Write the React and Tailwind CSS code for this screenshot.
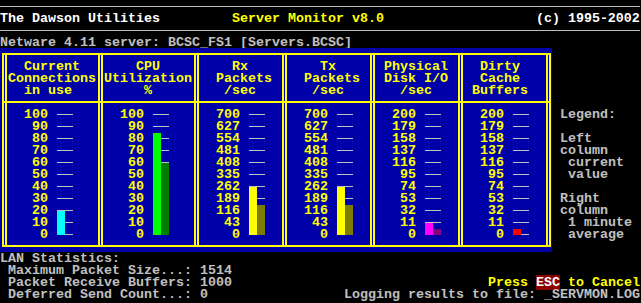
const panels = [
  {
    col: "col-start-2",
    head: ["  Current", "Connections", "  in use"],
    labels: ["100", "90", "80", "70", "60", "50", "40", "30", "20", "10", "0"],
    max: 100,
    cur: 20,
    avg: 0,
    hi: "bg-[#00ffff]",
    lo: "bg-[#008080]",
  },
  {
    col: "col-start-4",
    head: ["    CPU", "Utilization", "     %"],
    labels: ["100", "90", "80", "70", "60", "50", "40", "30", "20", "10", "0"],
    max: 100,
    cur: 85,
    avg: 60,
    hi: "bg-[#00ff00]",
    lo: "bg-[#007c00]",
  },
  {
    col: "col-start-6",
    head: ["    Rx", "  Packets", "   /sec"],
    labels: ["700", "627", "554", "481", "408", "335", "262", "189", "116", "43", "0"],
    max: 700,
    cur: 278,
    avg: 175,
    hi: "bg-[#ffff00]",
    lo: "bg-[#7c7c00]",
  },
  {
    col: "col-start-8",
    head: ["    Tx", "  Packets", "   /sec"],
    labels: ["700", "627", "554", "481", "408", "335", "262", "189", "116", "43", "0"],
    max: 700,
    cur: 278,
    avg: 175,
    hi: "bg-[#ffff00]",
    lo: "bg-[#7c7c00]",
  },
  {
    col: "col-start-10",
    head: [" Physical", " Disk I/O", "   /sec"],
    labels: ["200", "179", "158", "137", "116", "95", "74", "53", "32", "11", "0"],
    max: 200,
    cur: 20.5,
    avg: 10,
    hi: "bg-[#ff00ff]",
    lo: "bg-[#800080]",
  },
  {
    col: "col-start-12",
    head: ["  Dirty", "  Cache", " Buffers"],
    labels: ["200", "179", "158", "137", "116", "95", "74", "53", "32", "11", "0"],
    max: 200,
    cur: 10,
    avg: 0,
    hi: "bg-[#ff0000]",
    lo: "bg-[#800000]",
  },
];

const borderCols = [
  "col-start-1",
  "col-start-3",
  "col-start-5",
  "col-start-7",
  "col-start-9",
  "col-start-11",
  "col-start-13",
];

const hLines = ["row-start-1", "row-start-3", "row-start-5"];

const legend = ["Legend:", "", "Left", "column", " current", " value", "", "Right", "column", " 1 minute", " average"];

// one text-mode row: 12px tall, glyphs pushed down 1px like the VGA font
function Row({ children, className = "" }) {
  return <div className={"h-[12px] pt-[1px] whitespace-pre " + className}>{children}</div>;
}

function GrayLine() {
  return (
    <div className="h-[12px] flex items-center">
      <div className="h-px w-full bg-[#c0c0c0]" />
    </div>
  );
}

function Panel({ p }) {
  // bars: 120px covers the whole scale, zero sits 5px above the bottom of the area
  const curH = (p.cur / p.max) * 120;
  const avgH = (p.avg / p.max) * 120;
  return (
    <>
      <div className={p.col + " row-start-2 flex flex-col"}>
        {p.head.map((h, i) => (
          <Row key={i}>{h}</Row>
        ))}
      </div>
      <div className={p.col + " row-start-4 flex pl-[16px]"}>
        <div className="w-[24px] flex flex-col items-end">
          {p.labels.map((l) => (
            <Row key={l}>{l}</Row>
          ))}
        </div>
        <div className="relative ml-[9px] w-[16px] h-[132px] flex flex-col">
          {p.labels.map((l) => (
            <div key={l} className="h-[12px]">
              <div className="mt-[6px] h-px w-full bg-[#c0c0c0]" />
            </div>
          ))}
          {curH > 0 && (
            <div className={"absolute left-0 bottom-[5px] w-[8px] " + p.hi} style={{ height: curH }} />
          )}
          {avgH > 0 && (
            <div className={"absolute left-[8px] bottom-[5px] w-[8px] " + p.lo} style={{ height: avgH }} />
          )}
        </div>
      </div>
    </>
  );
}

export default function App() {
  return (
    <div className="w-[641px] h-[303px] bg-black overflow-hidden font-[family-name:'Liberation_Mono','Courier_New',monospace] font-bold text-[13.333px] leading-[12px] text-[#c0c0c0]">
      <div className="w-[640px] flex flex-col">
        <GrayLine />
        <Row>
          <span className="text-white">The Dawson Utilities</span>
          {"         "}
          <span className="text-[#ffff00]">Server Monitor v8.0</span>
          {"                   "}
          <span className="text-white">(c) 1995-2002</span>
        </Row>
        <GrayLine />
        <Row>Netware 4.11 server: BCSC_FS1 [Servers.BCSC]</Row>

        <div className="flex">
          <div className="w-[552px] h-[204px] bg-[#0000a8] text-[#ffff00] grid grid-cols-[8px_88px_8px_88px_8px_80px_8px_80px_8px_80px_8px_80px_8px] grid-rows-[12px_36px_12px_132px_12px]">
            {hLines.map((r) => (
              <div key={r} className={r + " col-span-full flex items-center px-[2px]"}>
                <div className="h-[2px] w-full bg-[#ffff00]" />
              </div>
            ))}
            {borderCols.map((c) => (
              <div key={c} className={c + " row-span-full py-[5px]"}>
                <div className="h-full ml-[2px] w-[5px] border-x-2 border-[#ffff00]" />
              </div>
            ))}
            {panels.map((p) => (
              <Panel key={p.col} p={p} />
            ))}
          </div>
          <div className="pl-[8px] pt-[60px] flex flex-col">
            {legend.map((l, i) => (
              <Row key={i}>{l}</Row>
            ))}
          </div>
        </div>

        <Row>LAN Statistics:</Row>
        <Row> Maximum Packet Size...: 1514</Row>
        <Row className="flex justify-between">
          <span> Packet Receive Buffers: 1000</span>
          <span className="text-[#ffff00]">
            Press <span className="bg-[#8c0000] text-white">ESC</span> to Cancel
          </span>
        </Row>
        <Row className="flex justify-between">
          <span> Deferred Send Count...: 0</span>
          <span>Logging results to file: _SERVMON.LOG</span>
        </Row>
      </div>
    </div>
  );
}
